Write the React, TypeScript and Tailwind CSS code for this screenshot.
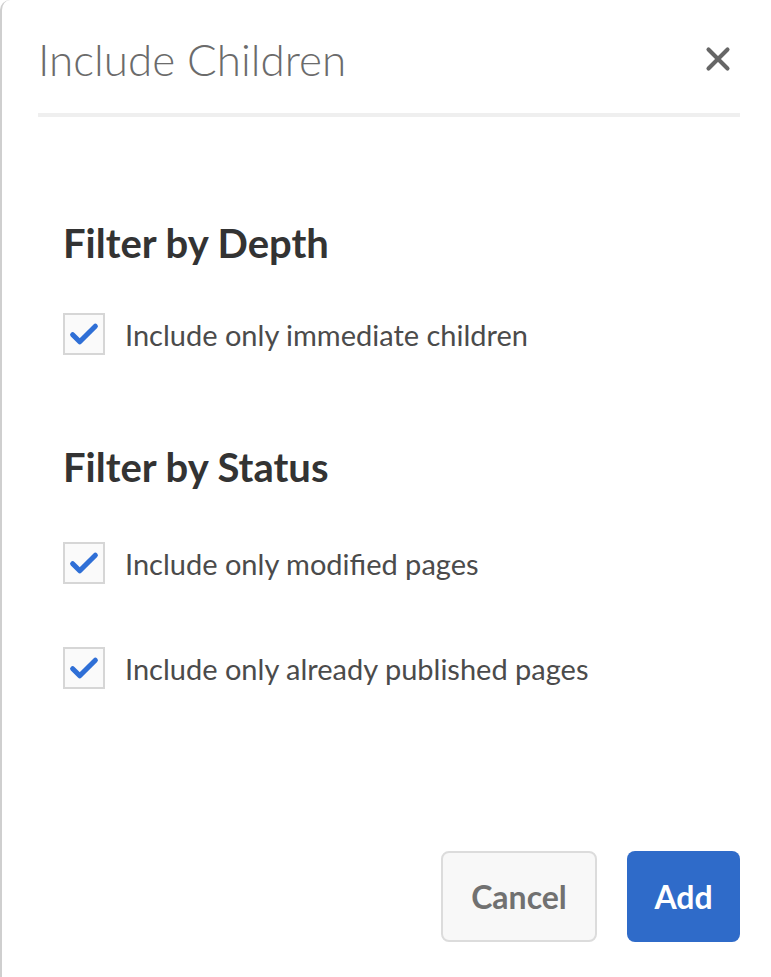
import { X } from 'lucide-react';

function Check({ label }: { label: string }) {
  return (
    <label className="flex items-center gap-[20px]">
      <span className="flex h-[42px] w-[42px] shrink-0 items-center justify-center border-2 border-[#d6d6d6] bg-[#fafafa]">
        <svg viewBox="0 0 24 24" className="h-[34px] w-[34px]" fill="none">
          <path d="M4 12.5l5 5L20 6.5" stroke="#2f6fd6" strokeWidth="3.6" strokeLinecap="round" strokeLinejoin="round" />
        </svg>
      </span>
      <span className="text-[29px] leading-none text-[#4b4b4b]">{label}</span>
    </label>
  );
}

export default function App() {
  return (
    <div className="h-[977px] w-[771px] overflow-hidden bg-white font-['Lato',sans-serif]">
      <div className="flex h-full flex-col rounded-tl-[10px] border-l-2 border-[#cfcfcf] pl-[36px] pr-[31px]">
        {/* Header */}
        <div className="flex h-[113px] items-center justify-between pt-[4px]">
          <h1 className="text-[44px] font-light leading-none text-[#6b6b6b]">Include Children</h1>
          <X className="mr-[3px] h-[38px] w-[38px] text-[#666]" strokeWidth={2.6} />
        </div>
        <div className="h-[4px] bg-[#efefef]" />

        {/* Body */}
        <div className="flex flex-1 flex-col pl-[25px] pt-[106px]">
          <h2 className="text-[40px] font-bold leading-none text-[#333]">Filter by Depth</h2>
          <div className="mt-[50px]">
            <Check label="Include only immediate children" />
          </div>

          <h2 className="mt-[92px] text-[40px] font-bold leading-none text-[#333]">Filter by Status</h2>
          <div className="mt-[55px] flex flex-col gap-[63px]">
            <Check label="Include only modified pages" />
            <Check label="Include only already published pages" />
          </div>
        </div>

        {/* Footer */}
        <div className="flex justify-end gap-[30px] pb-[35px]">
          <button className="h-[91px] w-[156px] rounded-[8px] border-2 border-[#dcdcdc] bg-[#f8f8f8] text-[32px] font-bold text-[#717171]">
            Cancel
          </button>
          <button className="h-[91px] w-[113px] rounded-[8px] bg-[#2f6bc9] text-[32px] font-bold text-white">
            Add
          </button>
        </div>
      </div>
    </div>
  );
}
